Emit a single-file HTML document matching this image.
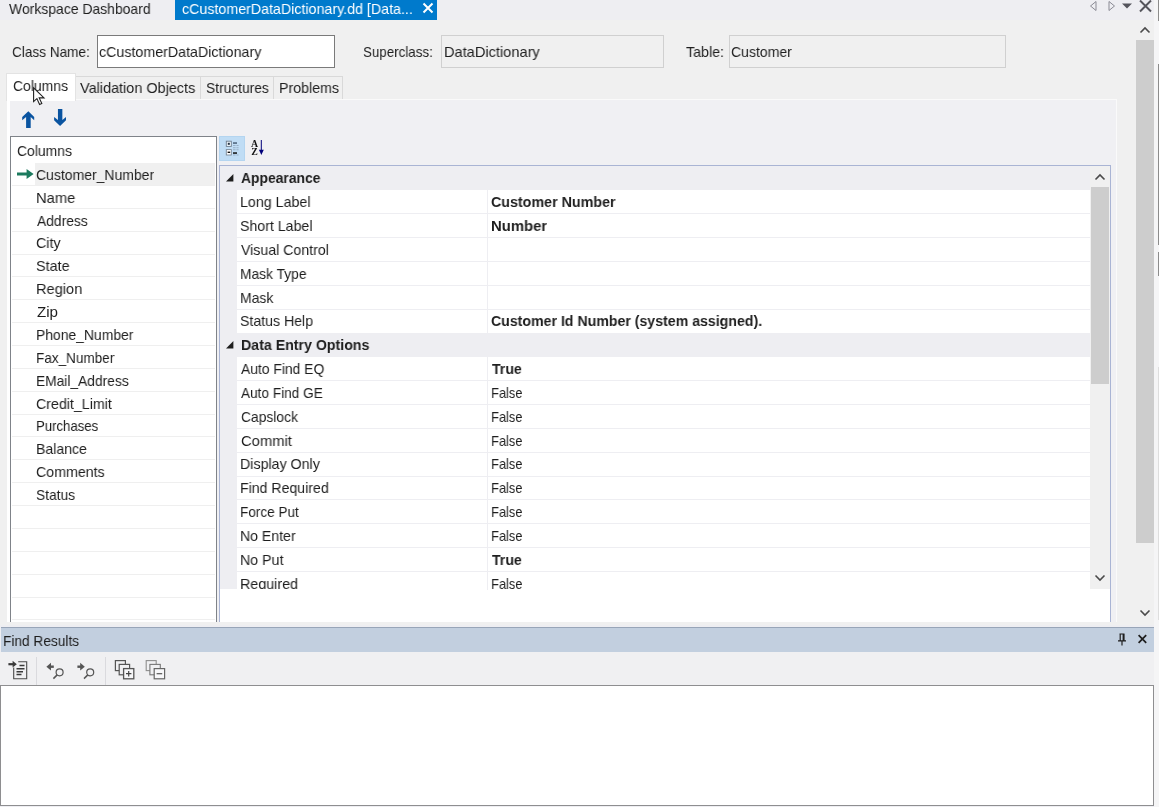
<!DOCTYPE html>
<html lang="en"><head>
<meta charset="utf-8">
<title>cCustomerDataDictionary.dd</title>
<style>
html,body{margin:0;padding:0;}
body{width:1159px;height:807px;overflow:hidden;position:relative;background:#eeeef2;
 font-family:"Liberation Sans",sans-serif;font-size:15px;color:#1e1e1e;}
.abs{position:absolute;}
.t{position:absolute;white-space:pre;line-height:18px;height:18px;transform-origin:0 0;will-change:transform;}
/* document tab strip */
#strip{left:0;top:0;width:1159px;height:20px;background:#eeeef2;}
#acttab{left:175px;top:0;width:262px;height:19.5px;background:#007acc;}
/* document body */
#doc{left:0;top:20px;width:1135px;height:605px;background:#f0f0f0;}
.inp{position:absolute;box-sizing:border-box;height:33px;top:35px;}
#in1{left:97px;width:238px;background:#fff;border:1px solid #7a7a7a;}
#in2{left:441px;width:223px;background:#f0f0f0;border:1px solid #d0d0d0;}
#in3{left:729px;width:277px;background:#f0f0f0;border:1px solid #d0d0d0;}
/* inner tabs */
.tab{position:absolute;box-sizing:border-box;top:76px;height:23px;background:#f0f0f0;border:1px solid #d9d9d9;border-bottom:none;border-left:none;}
#tabsel{left:6px;top:73px;width:70px;height:28px;box-sizing:border-box;background:#fff;border:1px solid #e3e3e3;border-bottom:none;}
#panel{left:7px;top:99px;width:1110px;height:523px;box-sizing:border-box;background:#f0f0f3;border:1px solid #fafafa;border-left:3px solid #fff;border-bottom:none;}
/* list */
#list{left:10px;top:136px;width:207px;height:486px;box-sizing:border-box;background:#fff;border:1px solid #7f8389;border-bottom:none;overflow:hidden;}
.lr{position:absolute;left:1px;width:203px;height:1px;background:#efefef;}
#lsel{left:24px;top:26px;width:180px;height:22px;background:#f0f0f0;}
/* property grid */
#pgbtn{left:219px;top:136px;width:26px;height:25px;box-sizing:border-box;background:#c0ddf5;border:1px solid #b4d5f0;}
#pg{left:219px;top:165px;width:892px;height:457px;box-sizing:border-box;background:#fff;border:1px solid #a9b4d4;border-bottom:none;overflow:hidden;}
#gut{left:0;top:0;width:17px;height:423px;background:#eeeef2;}
.cat{position:absolute;left:0;width:870px;height:24px;background:#eeeef2;}
.hl{position:absolute;left:17px;width:853px;height:1px;background:#eeeef2;}
#vl{left:267px;top:24px;width:1px;height:400px;background:#eeeef2;}
.b{font-weight:700;}
/* scrollbars */
.sb{position:absolute;background:#f0f0f0;}
.th{position:absolute;background:#cdcdcd;}
/* find results */
#frh{left:1px;top:627px;width:1153px;height:25px;box-sizing:border-box;background:#c2cfdf;border-top:1px solid #98a5b8;}
#frt{left:0;top:652px;width:1154px;height:34px;background:#f0f0f2;}
#frb{left:0;top:685px;width:1154px;height:121px;box-sizing:border-box;background:#fff;border:1px solid #8e8e90;}
.sep{position:absolute;width:1px;height:28px;top:657px;background:#dadade;}
svg{position:absolute;overflow:visible;}
</style>
</head>
<body>
<div id="strip" class="abs"></div>
<div id="acttab" class="abs"></div>
<div class="t" style="left: 8.87px; top: -0.4px; transform: scaleX(0.9297);">Workspace Dashboard</div>
<div class="t" style="left: 181.92px; top: -0.4px; color: rgb(255, 255, 255); transform: scaleX(0.9494);">cCustomerDataDictionary.dd [Data...</div>
<svg style="left:421.5px;top:1.6px;" width="12" height="12" viewBox="0 0 12 12"><path d="M1.5 1.5 L10.5 10.5 M10.5 1.5 L1.5 10.5" stroke="#fff" stroke-width="2" fill="none"></path></svg>
<!-- top-right strip icons -->
<svg style="left:1088px;top:0px;" width="70" height="14" viewBox="0 0 70 14">
 <path d="M8 1.5 L2.5 6 L8 10.5 Z" fill="none" stroke="#8a8a94" stroke-width="1"></path>
 <path d="M21 1.5 L26.5 6 L21 10.5 Z" fill="none" stroke="#8a8a94" stroke-width="1"></path>
 <path d="M34 3.5 L44 3.5 L39 8.5 Z" fill="#55555c"></path>
 <path d="M52 0.5 L63 11.5 M63 0.5 L52 11.5" stroke="#55555c" stroke-width="2" fill="none"></path>
</svg>

<div id="doc" class="abs"></div>
<div class="t" style="left: 11.65px; top: 42.6px; transform: scaleX(0.9066);">Class Name:</div>
<div id="in1" class="inp"></div>
<div class="t" style="left: 99.49px; top: 42.6px; transform: scaleX(0.9497);">cCustomerDataDictionary</div>
<div class="t" style="left: 363.44px; top: 42.6px; transform: scaleX(0.8904);">Superclass:</div>
<div id="in2" class="inp"></div>
<div class="t" style="left: 443.5px; top: 42.6px; transform: scaleX(0.9735);">DataDictionary</div>
<div class="t" style="left: 686.32px; top: 42.6px; transform: scaleX(0.9515);">Table:</div>
<div id="in3" class="inp"></div>
<div class="t" style="left: 731.31px; top: 42.6px; transform: scaleX(0.9355);">Customer</div>

<!-- inner tabs -->
<div id="panel" class="abs"></div>
<div class="tab" style="left:76px;width:125px;"></div>
<div class="tab" style="left:201px;width:73px;"></div>
<div class="tab" style="left:274px;width:69px;"></div>
<div id="tabsel" class="abs"></div>
<div class="t" style="left: 13.33px; top: 76.71px; transform: scaleX(0.9299);">Columns</div>
<div class="t" style="left: 79.9px; top: 78.85px; transform: scaleX(0.9626);">Validation Objects</div>
<div class="t" style="left: 206.2px; top: 78.85px; transform: scaleX(0.9196);">Structures</div>
<div class="t" style="left: 279.11px; top: 78.85px; transform: scaleX(0.9488);">Problems</div>
<!-- mouse cursor -->
<svg style="left:33px;top:86.5px;" width="13" height="19" viewBox="0 0 13 19"><path d="M0.6 0.8 L0.6 14.6 L3.9 11.6 L6.6 17.6 L8.8 16.6 L6.2 10.9 L11 10.9 Z" fill="#fff" stroke="#222" stroke-width="1.1"></path></svg>

<!-- arrows -->
<svg style="left:22px;top:111px;" width="13" height="18" viewBox="0 0 13 18"><path d="M6.35 0.2 L12.2 5.9 L12.2 9.3 L8.7 6.1 L8.7 17.1 L4.1 17.1 L4.1 6.1 L0.2 9.3 L0.2 5.9 Z" fill="#0a54a0"></path></svg>
<svg style="left:54px;top:109px;" width="13" height="18" viewBox="0 0 13 18"><path d="M6.05 17.1 L12 11.3 L12 7.9 L8.35 11 L8.35 0 L3.95 0 L3.95 11 L0.1 7.9 L0.1 11.3 Z" fill="#0a54a0"></path></svg>

<!-- columns list -->
<div id="list" class="abs">
 <div id="lsel" class="abs"></div>
 <div class="lr" style="top:48px"></div><div class="lr" style="top:71px"></div><div class="lr" style="top:94px"></div>
 <div class="lr" style="top:117px"></div><div class="lr" style="top:139px"></div><div class="lr" style="top:162px"></div>
 <div class="lr" style="top:185px"></div><div class="lr" style="top:208px"></div><div class="lr" style="top:231px"></div>
 <div class="lr" style="top:254px"></div><div class="lr" style="top:277px"></div><div class="lr" style="top:299px"></div>
 <div class="lr" style="top:322px"></div><div class="lr" style="top:345px"></div><div class="lr" style="top:368px"></div>
 <div class="lr" style="top:391px"></div><div class="lr" style="top:414px"></div><div class="lr" style="top:437px"></div>
 <div class="lr" style="top:460px"></div><div class="lr" style="top:482px"></div>
 <div class="t" style="left: 6.17px; top: 5.3px; transform: scaleX(0.9287);">Columns</div>
 <svg style="left:5.5px;top:32px;" width="17" height="10" viewBox="0 0 17 10"><path d="M0 3.4 L9.6 3.4 L9.6 0 L16.6 5 L9.6 10 L9.6 6.6 L0 6.6 Z" fill="#1c7a5e"></path></svg>
 <div class="t" style="left: 25.26px; top: 28.8px; transform: scaleX(0.9327);">Customer_Number</div>
 <div class="t" style="left: 24.91px; top: 51.68px; transform: scaleX(0.9807);">Name</div>
 <div class="t" style="left: 25.84px; top: 74.54px; transform: scaleX(0.9219);">Address</div>
 <div class="t" style="left: 25.3px; top: 97.41px; transform: scaleX(0.9545);">City</div>
 <div class="t" style="left: 25.14px; top: 120.29px; transform: scaleX(0.9573);">State</div>
 <div class="t" style="left: 24.92px; top: 143.16px; transform: scaleX(0.9738);">Region</div>
 <div class="t" style="left: 25.53px; top: 166.03px; transform: scaleX(1.0086);">Zip</div>
 <div class="t" style="left: 25.05px; top: 188.9px; transform: scaleX(0.9269);">Phone_Number</div>
 <div class="t" style="left: 25.31px; top: 211.77px; transform: scaleX(0.9026);">Fax_Number</div>
 <div class="t" style="left: 25.16px; top: 234.64px; transform: scaleX(0.9183);">EMail_Address</div>
 <div class="t" style="left: 25.34px; top: 257.5px; transform: scaleX(0.9483);">Credit_Limit</div>
 <div class="t" style="left: 24.57px; top: 280.38px; transform: scaleX(0.8786);">Purchases</div>
 <div class="t" style="left: 25.03px; top: 303.24px; transform: scaleX(0.9396);">Balance</div>
 <div class="t" style="left: 25.35px; top: 326.11px; transform: scaleX(0.9469);">Comments</div>
 <div class="t" style="left: 24.58px; top: 348.99px; transform: scaleX(0.9185);">Status</div>
</div>

<!-- property grid toolbar -->
<div id="pgbtn" class="abs"></div>
<svg style="left:225px;top:140px;" width="15" height="17" viewBox="0 0 15 17">
 <rect x="1.3" y="1.2" width="5" height="5.2" fill="#eef5fb" stroke="#6f7f90" stroke-width="0.9"></rect><rect x="2.8" y="2.8" width="2" height="2" fill="#1e2d3c"></rect>
 <rect x="1.3" y="9.6" width="5" height="5.4" fill="#fff" stroke="#7a8896" stroke-width="0.9"></rect><rect x="2.6" y="11.6" width="2.6" height="1.4" fill="#111"></rect>
 <rect x="8" y="2.3" width="4" height="1.5" fill="#4a6078"></rect>
 <rect x="8" y="5.2" width="2.6" height="0.8" fill="#8fa6bd"></rect><rect x="11.4" y="5.2" width="2.2" height="0.8" fill="#8fa6bd"></rect>
 <rect x="8" y="7.4" width="2.6" height="0.8" fill="#8fa6bd"></rect><rect x="11.4" y="7.4" width="2.2" height="0.8" fill="#8fa6bd"></rect>
 <rect x="8" y="9.4" width="2.6" height="0.8" fill="#8fa6bd"></rect><rect x="11.4" y="9.4" width="2.2" height="0.8" fill="#8fa6bd"></rect>
 <rect x="8" y="12.3" width="4" height="1.5" fill="#111"></rect>
 <rect x="8" y="14.6" width="2.6" height="0.8" fill="#8fa6bd"></rect><rect x="11.4" y="14.6" width="2.2" height="0.8" fill="#8fa6bd"></rect>
</svg>
<svg style="left:251px;top:140px;will-change:transform;" width="14" height="16" viewBox="0 0 14 16">
 <text x="0" y="7" font-family="Liberation Serif, serif" font-size="9.8" font-weight="700" fill="#111">A</text>
 <text x="0.2" y="14.8" font-family="Liberation Serif, serif" font-size="9.8" font-weight="700" fill="#111">Z</text>
 <path d="M10.3 0 L10.3 11" stroke="#00007a" stroke-width="1" fill="none"></path><path d="M7.9 9.8 L12.8 9.8 L10.35 14.9 Z" fill="#00007a"></path>
</svg>

<!-- property grid -->
<div id="pg" class="abs">
 <div id="gut" class="abs"></div>
 <div class="cat" style="top:0px"></div>
 <div class="cat" style="top:167px"></div>
 <div id="vl" class="abs"></div>
 <div class="hl" style="top:47px"></div><div class="hl" style="top:71px"></div><div class="hl" style="top:95px"></div>
 <div class="hl" style="top:119px"></div><div class="hl" style="top:143px"></div>
 <div class="hl" style="top:214px"></div><div class="hl" style="top:238px"></div><div class="hl" style="top:262px"></div>
 <div class="hl" style="top:286px"></div><div class="hl" style="top:310px"></div><div class="hl" style="top:333px"></div>
 <div class="hl" style="top:357px"></div><div class="hl" style="top:381px"></div><div class="hl" style="top:405px"></div>
 <svg style="left:6px;top:8px;" width="8" height="8" viewBox="0 0 8 8"><path d="M7.4 0 L7.4 7.4 L0 7.4 Z" fill="#1e1e1e"></path></svg>
 <svg style="left:6px;top:175px;" width="8" height="8" viewBox="0 0 8 8"><path d="M7.4 0 L7.4 7.4 L0 7.4 Z" fill="#1e1e1e"></path></svg>
 <div class="t b" style="left: 20.68px; top: 3.3px; transform: scaleX(0.9248);">Appearance</div>
 <div class="t" style="left: 20.38px; top: 27.15px; transform: scaleX(0.9493);">Long Label</div><div class="t b" style="left: 270.91px; top: 27.15px; transform: scaleX(0.9514);">Customer Number</div>
 <div class="t" style="left: 20.3px; top: 50.98px; transform: scaleX(0.9446);">Short Label</div><div class="t b" style="left: 271.01px; top: 50.98px; transform: scaleX(0.9912);">Number</div>
 <div class="t" style="left: 21.45px; top: 74.83px; transform: scaleX(0.9431);">Visual Control</div>
 <div class="t" style="left: 20.09px; top: 98.67px; transform: scaleX(0.9205);">Mask Type</div>
 <div class="t" style="left: 20.11px; top: 122.51px; transform: scaleX(0.9329);">Mask</div>
 <div class="t" style="left: 20.45px; top: 146.34px; transform: scaleX(0.9419);">Status Help</div><div class="t b" style="left: 271.16px; top: 146.34px; transform: scaleX(0.9426);">Customer Id Number (system assigned).</div>
 <div class="t b" style="left: 20.77px; top: 170.19px; transform: scaleX(0.9453);">Data Entry Options</div>
 <div class="t" style="left: 20.99px; top: 194.02px; transform: scaleX(0.9245);">Auto Find EQ</div><div class="t b" style="left: 271.86px; top: 194.02px; transform: scaleX(0.941);">True</div>
 <div class="t" style="left: 21.38px; top: 217.87px; transform: scaleX(0.9088);">Auto Find GE</div><div class="t" style="left: 271.19px; top: 217.87px; transform: scaleX(0.8594);">False</div>
 <div class="t" style="left: 20.97px; top: 241.7px; transform: scaleX(0.9228);">Capslock</div><div class="t" style="left: 271.19px; top: 241.7px; transform: scaleX(0.8594);">False</div>
 <div class="t" style="left: 21.26px; top: 265.55px; transform: scaleX(0.9848);">Commit</div><div class="t" style="left: 271.19px; top: 265.55px; transform: scaleX(0.8594);">False</div>
 <div class="t" style="left: 20.34px; top: 289.38px; transform: scaleX(0.9485);">Display Only</div><div class="t" style="left: 271.19px; top: 289.38px; transform: scaleX(0.8594);">False</div>
 <div class="t" style="left: 20.45px; top: 313.22px; transform: scaleX(0.9409);">Find Required</div><div class="t" style="left: 271.19px; top: 313.22px; transform: scaleX(0.8594);">False</div>
 <div class="t" style="left: 20.02px; top: 337.06px; transform: scaleX(0.905);">Force Put</div><div class="t" style="left: 271.19px; top: 337.06px; transform: scaleX(0.8594);">False</div>
 <div class="t" style="left: 20.49px; top: 360.9px; transform: scaleX(0.9397);">No Enter</div><div class="t" style="left: 271.19px; top: 360.9px; transform: scaleX(0.8594);">False</div>
 <div class="t" style="left: 20.42px; top: 384.74px; transform: scaleX(0.9478);">No Put</div><div class="t b" style="left: 271.86px; top: 384.74px; transform: scaleX(0.941);">True</div>
 <div class="abs" style="left:17px;top:405px;width:854px;height:18px;overflow:hidden;"><div class="t" style="left: 3.2px; top: 3.58px; transform: scaleX(0.9535);">Required</div><div class="t" style="left: 254.19px; top: 3.58px; transform: scaleX(0.8594);">False</div></div>
 <!-- grid scrollbar -->
 <div class="sb" style="left:870px;top:0;width:20px;height:423px;"></div>
 <div class="th" style="left:871px;top:21px;width:18px;height:197px;"></div>
 <svg style="left:874px;top:7px;" width="12" height="8" viewBox="0 0 12 8"><path d="M1.5 6.5 L6 2 L10.5 6.5" stroke="#4a4a4a" stroke-width="1.6" fill="none"></path></svg>
 <svg style="left:874px;top:408px;" width="12" height="8" viewBox="0 0 12 8"><path d="M1.5 1.5 L6 6 L10.5 1.5" stroke="#4a4a4a" stroke-width="1.6" fill="none"></path></svg>
</div>

<!-- outer scrollbar -->
<div class="sb" style="left:1135px;top:20px;width:19px;height:605px;"></div>
<div class="th" style="left:1136px;top:40px;width:18px;height:503px;"></div>
<svg style="left:1139px;top:26px;" width="12" height="8" viewBox="0 0 12 8"><path d="M1.5 6.5 L6 2 L10.5 6.5" stroke="#4a4a4a" stroke-width="1.6" fill="none"></path></svg>
<svg style="left:1139px;top:609px;" width="12" height="8" viewBox="0 0 12 8"><path d="M1.5 1.5 L6 6 L10.5 1.5" stroke="#4a4a4a" stroke-width="1.6" fill="none"></path></svg>
<div class="abs" style="left:1154px;top:0;width:5px;height:807px;background:#f5f5f6;"></div>
<div class="abs" style="left:1157.6px;top:0;width:1.4px;height:20.5px;background:#8c8c8c;"></div>
<div class="abs" style="left:1157.6px;top:64px;width:1.4px;height:181px;background:#8c8c8c;"></div>
<div class="abs" style="left:1157.6px;top:251.5px;width:1.4px;height:24px;background:#8c8c8c;"></div>
<div class="abs" style="left:1157.6px;top:367px;width:1.4px;height:253px;background:#dedede;"></div>

<!-- find results -->
<div id="frh" class="abs"></div>
<div class="t" style="left: 3.39px; top: 631.85px; transform: scaleX(0.9129);">Find Results</div>
<div id="frt" class="abs"></div>
<div id="frb" class="abs"></div>
<div class="sep" style="left:36px;"></div><div class="sep" style="left:105px;"></div>
<!-- find results toolbar icons -->
<svg style="left:8px;top:659px;" width="21" height="22" viewBox="0 0 21 22">
 <path d="M10.2 2.7 L18.7 2.7 L18.7 19.7 L5.7 19.7 L5.7 8.5" fill="none" stroke="#4a4a4a" stroke-width="1.1"></path>
 <path d="M11.5 6.6 L16.5 6.6 M8.5 9.7 L16.5 9.7 M8.5 12.7 L15 12.7 M8.5 15.6 L13.5 15.6" stroke="#3a3a3a" stroke-width="1.5" fill="none"></path>
 <path d="M0.4 5.2 L5.6 5.2" stroke="#3a3a3a" stroke-width="2.2" fill="none"></path>
 <path d="M4.6 1.8 L8.8 5.2 L4.6 8.6 Z" fill="#3a3a3a"></path>
</svg>
<svg style="left:46px;top:661px;" width="20" height="19" viewBox="0 0 20 19">
 <path d="M7.8 5.7 L3 5.7" stroke="#555" stroke-width="2.4" fill="none"></path>
 <path d="M5 1.8 L0.4 5.7 L5 9.6 Z" fill="#555"></path>
 <circle cx="13.6" cy="11.3" r="3.5" fill="none" stroke="#555" stroke-width="1.2"></circle>
 <path d="M11.2 13.9 L7.4 17.6" stroke="#555" stroke-width="1.5" fill="none"></path>
</svg>
<svg style="left:77px;top:661px;" width="20" height="19" viewBox="0 0 20 19">
 <path d="M0.4 5.7 L5.2 5.7" stroke="#555" stroke-width="2.4" fill="none"></path>
 <path d="M3.2 1.8 L7.8 5.7 L3.2 9.6 Z" fill="#555"></path>
 <circle cx="13.2" cy="11.3" r="3.5" fill="none" stroke="#555" stroke-width="1.2"></circle>
 <path d="M10.8 13.9 L7 17.6" stroke="#555" stroke-width="1.5" fill="none"></path>
</svg>
<svg style="left:114px;top:659px;" width="22" height="22" viewBox="0 0 22 22">
 <rect x="1.4" y="1.6" width="10" height="10" fill="#f0f0f2" stroke="#555" stroke-width="1.2"></rect>
 <rect x="5.2" y="5.4" width="10.4" height="10.4" fill="#f0f0f2" stroke="#555" stroke-width="1.2"></rect>
 <rect x="9.6" y="9.6" width="10.2" height="10.2" fill="#f7f7f9" stroke="#555" stroke-width="1.3"></rect>
 <path d="M12 14.7 L17.4 14.7 M14.7 12 L14.7 17.4" stroke="#444" stroke-width="1.2" fill="none"></path>
</svg>
<svg style="left:145px;top:659px;" width="22" height="22" viewBox="0 0 22 22">
 <rect x="1.2" y="1.6" width="10" height="10" fill="#f0f0f2" stroke="#8e8e8e" stroke-width="1.1"></rect>
 <rect x="4.9" y="5.4" width="10.4" height="10.4" fill="#f0f0f2" stroke="#777" stroke-width="1.1"></rect>
 <rect x="9.2" y="9.6" width="10.4" height="10.2" fill="#f7f7f9" stroke="#666" stroke-width="1.2"></rect>
 <path d="M11.6 14.7 L17.2 14.7" stroke="#555" stroke-width="1.2" fill="none"></path>
</svg>
<!-- pin / close -->
<svg style="left:1117px;top:633px;" width="32" height="14" viewBox="0 0 32 14">
 <path d="M2.5 1 L7.5 1 M3.2 1 L3.2 7.6 M6.2 1 L6.2 7.6 M7 1 L7 7.6 M1 7.8 L9 7.8 M5 8 L5 12.5" stroke="#1e1e1e" stroke-width="1.2" fill="none"></path>
 <path d="M21.6 2.1 L29.2 9.9 M29.2 2.1 L21.6 9.9" stroke="#1e1e1e" stroke-width="1.7" fill="none"></path>
</svg>




















</body></html>
